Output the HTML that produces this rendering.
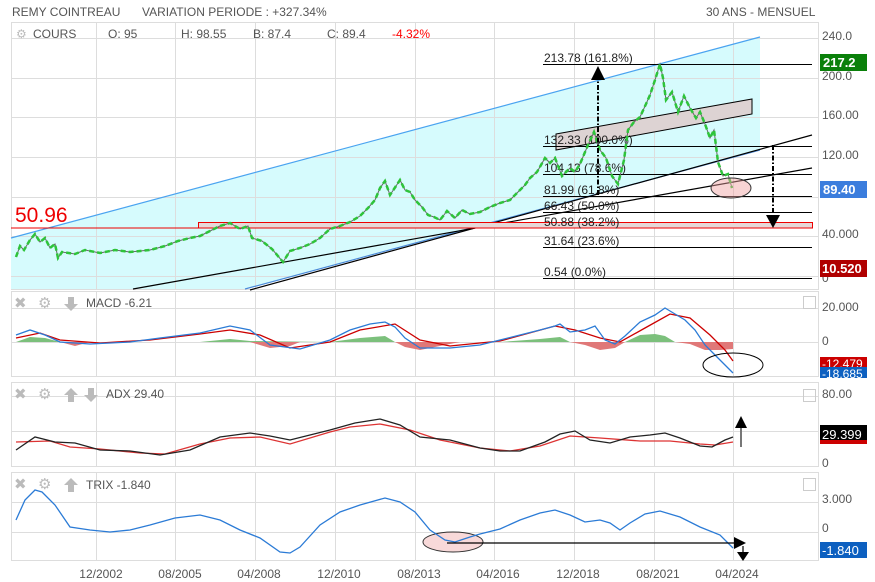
<!DOCTYPE html>
<html><head><meta charset="utf-8"><style>
body{margin:0;width:875px;height:582px;background:#fff;font-family:"Liberation Sans",sans-serif;overflow:hidden}
svg{position:absolute;left:0;top:0}
text{font-family:"Liberation Sans",sans-serif}
</style></head><body>
<svg width="875" height="582" viewBox="0 0 875 582">
<g font-size="12" fill="#555">
<text x="12" y="16">REMY COINTREAU</text>
<text x="142" y="16">VARIATION PERIODE : +327.34%</text>
<text x="706" y="16">30 ANS - MENSUEL</text>
</g>
<g fill="none" stroke="#ddd" stroke-width="1">
<rect x="11.5" y="22.5" width="807" height="267"/>
<rect x="11.5" y="291.5" width="807" height="85"/>
<rect x="11.5" y="382.5" width="807" height="84"/>
<rect x="11.5" y="472.5" width="807" height="88"/>
</g>
<polygon points="11,238 760,37 760,150 245,289 11,289" fill="#d6fbfd"/>
<g stroke="#ddd" stroke-width="1">
<path d="M96.5 22V290M175.5 22V290M255.5 22V290M335.5 22V290M415.5 22V290M494.5 22V290M574.5 22V290M654.5 22V290M733.5 22V290"/>
<path d="M96.5 292V376M175.5 292V376M255.5 292V376M335.5 292V376M415.5 292V376M494.5 292V376M574.5 292V376M654.5 292V376M733.5 292V376"/>
<path d="M96.5 383V466M175.5 383V466M255.5 383V466M335.5 383V466M415.5 383V466M494.5 383V466M574.5 383V466M654.5 383V466M733.5 383V466"/>
<path d="M96.5 473V560M175.5 473V560M255.5 473V560M335.5 473V560M415.5 473V560M494.5 473V560M574.5 473V560M654.5 473V560M733.5 473V560"/>
<path d="M11 38.5H818M11 78.5H818M11 117.5H818M11 157.5H818M11 197.5H818M11 236.5H818M11 276.5H818"/>
<path d="M11 308.5H818M11 342.5H818"/>
<path d="M11 396.5H818M11 431.5H818"/>
<path d="M11 502.5H818M11 532.5H818"/>
</g>
<g fill="none" stroke-width="1.2">
<line x1="11" y1="238" x2="760" y2="37" stroke="#4aa3f0"/>
<line x1="245" y1="289" x2="760" y2="150" stroke="#4a8ad8"/>
<line x1="250" y1="290" x2="812" y2="135" stroke="#000"/>
<line x1="133" y1="289" x2="812" y2="168" stroke="#000"/>
</g>
<rect x="198.5" y="222.5" width="614" height="5.5" fill="#e6d8d8" stroke="#e00" stroke-width="1"/>
<line x1="11" y1="228" x2="198" y2="228" stroke="#e00"/>
<text x="15" y="222" font-size="21" fill="#e00">50.96</text>
<polygon points="556,134 752,99 752,114 556,150" fill="#ddd3d3" stroke="#000" stroke-width="1"/>
<g stroke="#000" stroke-width="1">
<path d="M543 64.5H812M543 146.5H812M543 174.5H812M543 196.5H812M543 212.5H812M543 247.5H812M543 278.5H812"/>
</g>
<g font-size="12" fill="#222">
<text x="544" y="62">213.78  (161.8%)</text>
<text x="544" y="144">132.33  (100.0%)</text>
<text x="544" y="172">104.13  (78.6%)</text>
<text x="544" y="194">81.99  (61.8%)</text>
<text x="544" y="210">66.43  (50.0%)</text>
<text x="544" y="226">50.88  (38.2%)</text>
<text x="544" y="245">31.64  (23.6%)</text>
<text x="544" y="276">0.54  (0.0%)</text>
</g>
<!-- price -->
<polyline fill="none" stroke="#666" stroke-width="1" points="16,257 20,246 24,250 30,240 35,234 40,242 45,238 50,248 55,244 58,258 62,252 75,254 85,250 100,253 115,250 130,252 150,250 165,246 178,241 190,238 200,236 210,231 220,226 230,223 240,229 248,226 252,238 262,241 272,249 283,262 290,251 300,248 310,244 320,238 330,229 340,226 350,222 360,216 368,208 375,200 380,188 385,181 390,195 396,186 400,180 405,190 410,192 415,200 422,207 428,215 434,217 440,220 447,211 455,218 462,210 470,214 480,212 490,207 500,203 510,200 518,192 525,185 530,178 537,172 545,158 550,163 555,158 562,176 570,168 575,172 580,164 588,145 594,132 600,150 606,158 612,176 618,184 624,160 628,130 634,122 640,117 646,104 650,95 655,80 660,64 663,78 666,100 672,92 678,112 684,96 690,108 696,118 700,112 705,124 710,138 714,130 718,162 723,176 728,174 732,188"/>
<polyline fill="none" stroke="#2ec43a" stroke-width="2.5" points="16,257 20,246 24,250 30,240 35,234 40,242 45,238 50,248 55,244 58,258 62,252 75,254 85,250 100,253 115,250 130,252 150,250 165,246 178,241 190,238 200,236 210,231 220,226 230,223 240,229 248,226 252,238 262,241 272,249 283,262 290,251 300,248 310,244 320,238 330,229 340,226 350,222 360,216 368,208 375,200 380,188 385,181 390,195 396,186 400,180 405,190 410,192 415,200 422,207 428,215 434,217 440,220 447,211 455,218 462,210 470,214 480,212 490,207 500,203 510,200 518,192 525,185 530,178 537,172 545,158 550,163 555,158 562,176 570,168 575,172 580,164 588,145 594,132 600,150 606,158 612,176 618,184 624,160 628,130 634,122 640,117 646,104 650,95 655,80 660,64 663,78 666,100 672,92 678,112 684,96 690,108 696,118 700,112 705,124 710,138 714,130 718,162 723,176 728,174 732,188" stroke-dasharray="5 3"/>
<ellipse cx="731" cy="188" rx="20" ry="10" fill="rgba(240,160,160,.45)" stroke="#333"/>
<g stroke="#000" stroke-width="2" stroke-dasharray="5 2 1.5 2" fill="none">
<line x1="598" y1="195" x2="598" y2="78"/>
<line x1="773" y1="145" x2="773" y2="216"/>
</g>
<polygon points="591,80 605,80 598,66" fill="#000"/>
<polygon points="766,215 780,215 773,228" fill="#000"/>
<g font-size="12" fill="#555">
<text x="16" y="38" fill="#bbb">⚙</text>
<text x="33" y="38">COURS</text>
<text x="108" y="38">O: 95</text>
<text x="181" y="38">H: 98.55</text>
<text x="253" y="38">B: 87.4</text>
<text x="327" y="38">C: 89.4</text>
<text x="392" y="38" fill="#f00">-4.32%</text>
</g>
<g font-size="12" fill="#555">
<text x="822" y="40">240.0</text>
<text x="822" y="80">200.0</text>
<text x="822" y="119">160.00</text>
<text x="822" y="159">120.00</text>
<text x="822" y="238">40.000</text>
<text x="822" y="282">0</text>
</g>
<rect x="820" y="54" width="47" height="17" fill="#0a800a"/>
<text x="823" y="67" font-size="13" font-weight="bold" fill="#fff">217.2</text>
<rect x="820" y="181" width="47" height="17" fill="#3b7ddd"/>
<text x="823" y="194" font-size="13" font-weight="bold" fill="#fff">89.40</text>
<rect x="820" y="260" width="47" height="17" fill="#b00000"/>
<text x="822" y="273" font-size="13" font-weight="bold" fill="#fff">10.520</text>

<polygon fill="#7cc07c" points="16,342 30,337 45,338 60,342 200,342 230,339 250,341 330,342 360,338 385,336 395,342 500,342 540,339 560,337 570,342 625,342 640,335 655,334 665,336 675,342"/>
<polygon fill="#e07878" points="60,342 75,346 90,342 250,342 270,348 290,346 300,342 395,342 405,347 420,350 440,346 460,342 570,342 585,345 600,350 615,348 625,342 675,342 690,344 705,350 720,350 733,349 733,342"/>
<polyline fill="none" stroke="#c00" stroke-width="1.3" points="16,338 40,333 60,340 100,343 150,340 200,334 230,330 260,335 290,348 330,342 360,330 395,324 420,340 450,346 500,341 555,326 575,330 600,338 620,342 645,328 670,314 690,318 710,335 725,350 733,361"/>
<polyline fill="none" stroke="#2b7bd6" stroke-width="1.3" points="16,335 30,330 45,335 60,342 90,344 130,342 160,338 200,333 230,326 250,330 270,345 300,349 330,340 350,330 370,324 385,322 395,327 405,338 420,348 450,348 480,345 500,340 520,335 540,330 555,326 560,324 570,332 585,330 595,326 605,340 615,344 625,336 640,322 655,315 665,308 675,314 685,320 695,330 705,345 715,355 725,365 733,373"/>
<ellipse cx="733" cy="365" rx="30" ry="12" fill="none" stroke="#000"/>
<rect x="803.5" y="296.5" width="12" height="12" fill="none" stroke="#ccc"/>
<g font-size="12" fill="#555">
<text x="822" y="311">20.000</text>
<text x="822" y="345">0</text>
</g>
<rect x="820" y="357" width="47" height="11" fill="#c00"/>
<text x="822" y="368" font-size="12" fill="#fff">-12.479</text>
<rect x="820" y="367" width="47" height="11" fill="#0d60c0"/>
<text x="822" y="378" font-size="12" fill="#fff">-18.685</text>

<polyline fill="none" stroke="#d33" stroke-width="1.3" points="16,442 50,441 70,447 100,449 140,453 165,454 200,444 230,438 260,437 290,444 330,432 350,427 380,424 410,430 440,440 480,448 510,451 540,446 570,436 600,438 640,441 670,441 700,444 715,445 733,442"/>
<polyline fill="none" stroke="#222" stroke-width="1.3" points="16,450 35,437 55,442 75,443 100,450 130,451 160,455 190,450 220,437 250,433 270,436 290,440 330,430 355,423 380,419 400,425 420,437 450,440 480,448 500,451 520,451 545,442 560,434 575,431 590,440 610,443 630,437 650,435 665,433 680,438 700,446 712,447 725,440 733,437"/>
<line x1="741" y1="447" x2="741" y2="426" stroke="#777" stroke-width="2"/>
<polygon points="735,428 747,428 741,416" fill="#000"/>
<rect x="803.5" y="389.5" width="12" height="12" fill="none" stroke="#ccc"/>
<g font-size="12" fill="#555">
<text x="822" y="398">80.00</text>
<text x="822" y="467">0</text>
</g>
<rect x="820" y="425" width="47" height="18" fill="#000"/>
<rect x="820" y="440" width="47" height="4" fill="#c00"/>
<text x="822" y="439" font-size="13" fill="#fff">29.399</text>

<ellipse cx="453" cy="542" rx="30" ry="10" fill="rgba(240,170,170,.45)" stroke="#333"/>
<polyline fill="none" stroke="#2b7bd6" stroke-width="1.3" points="16,520 25,500 35,490 42,492 55,505 70,527 90,530 110,532 130,530 150,525 175,518 200,515 220,520 240,530 260,538 280,552 290,553 300,547 320,525 340,512 360,505 385,498 400,502 415,512 430,530 445,540 455,542 470,537 480,534 500,529 520,520 540,513 555,510 570,515 585,522 600,520 610,523 620,530 630,523 645,514 660,511 680,517 700,527 720,535 733,548"/>
<line x1="447" y1="543" x2="735" y2="543" stroke="#000" stroke-width="1.3"/>
<polygon points="734,537 746,543 734,549" fill="#000"/>
<line x1="743" y1="546" x2="743" y2="554" stroke="#333" stroke-width="1.5"/>
<polygon points="737,552 749,552 743,561" fill="#000"/>
<rect x="803.5" y="478.5" width="12" height="12" fill="none" stroke="#ccc"/>
<g font-size="12" fill="#555">
<text x="822" y="503">3.000</text>
<text x="822" y="532">0</text>
</g>
<rect x="820" y="542" width="47" height="16" fill="#0d60c0"/>
<text x="822" y="555" font-size="13" fill="#fff">-1.840</text>

<g fill="#bbb" font-size="15">
<text x="14" y="308">✖</text><text x="38" y="308">⚙</text>
<text x="14" y="399">✖</text><text x="38" y="399">⚙</text>
<text x="14" y="489">✖</text><text x="38" y="489">⚙</text>
</g>
<g fill="#bbb">
<path d="M68 297h6v7h4l-7 7-7-7h4z"/>
<path d="M71 388l7 7h-4v7h-6v-7h-4z"/>
<path d="M88 388h6v7h4l-7 7-7-7h4z"/>
<path d="M71 478l7 7h-4v7h-6v-7h-4z"/>
</g>
<g font-size="12" fill="#555">
<text x="86" y="307">MACD  -6.21</text>
<text x="106" y="398">ADX  29.40</text>
<text x="86" y="489">TRIX  -1.840</text>
</g>
<g font-size="12" fill="#555" text-anchor="middle">
<text x="101" y="578">12/2002</text>
<text x="180" y="578">08/2005</text>
<text x="259" y="578">04/2008</text>
<text x="339" y="578">12/2010</text>
<text x="419" y="578">08/2013</text>
<text x="498" y="578">04/2016</text>
<text x="578" y="578">12/2018</text>
<text x="658" y="578">08/2021</text>
<text x="737" y="578">04/2024</text>
</g>
</svg>
</body></html>
